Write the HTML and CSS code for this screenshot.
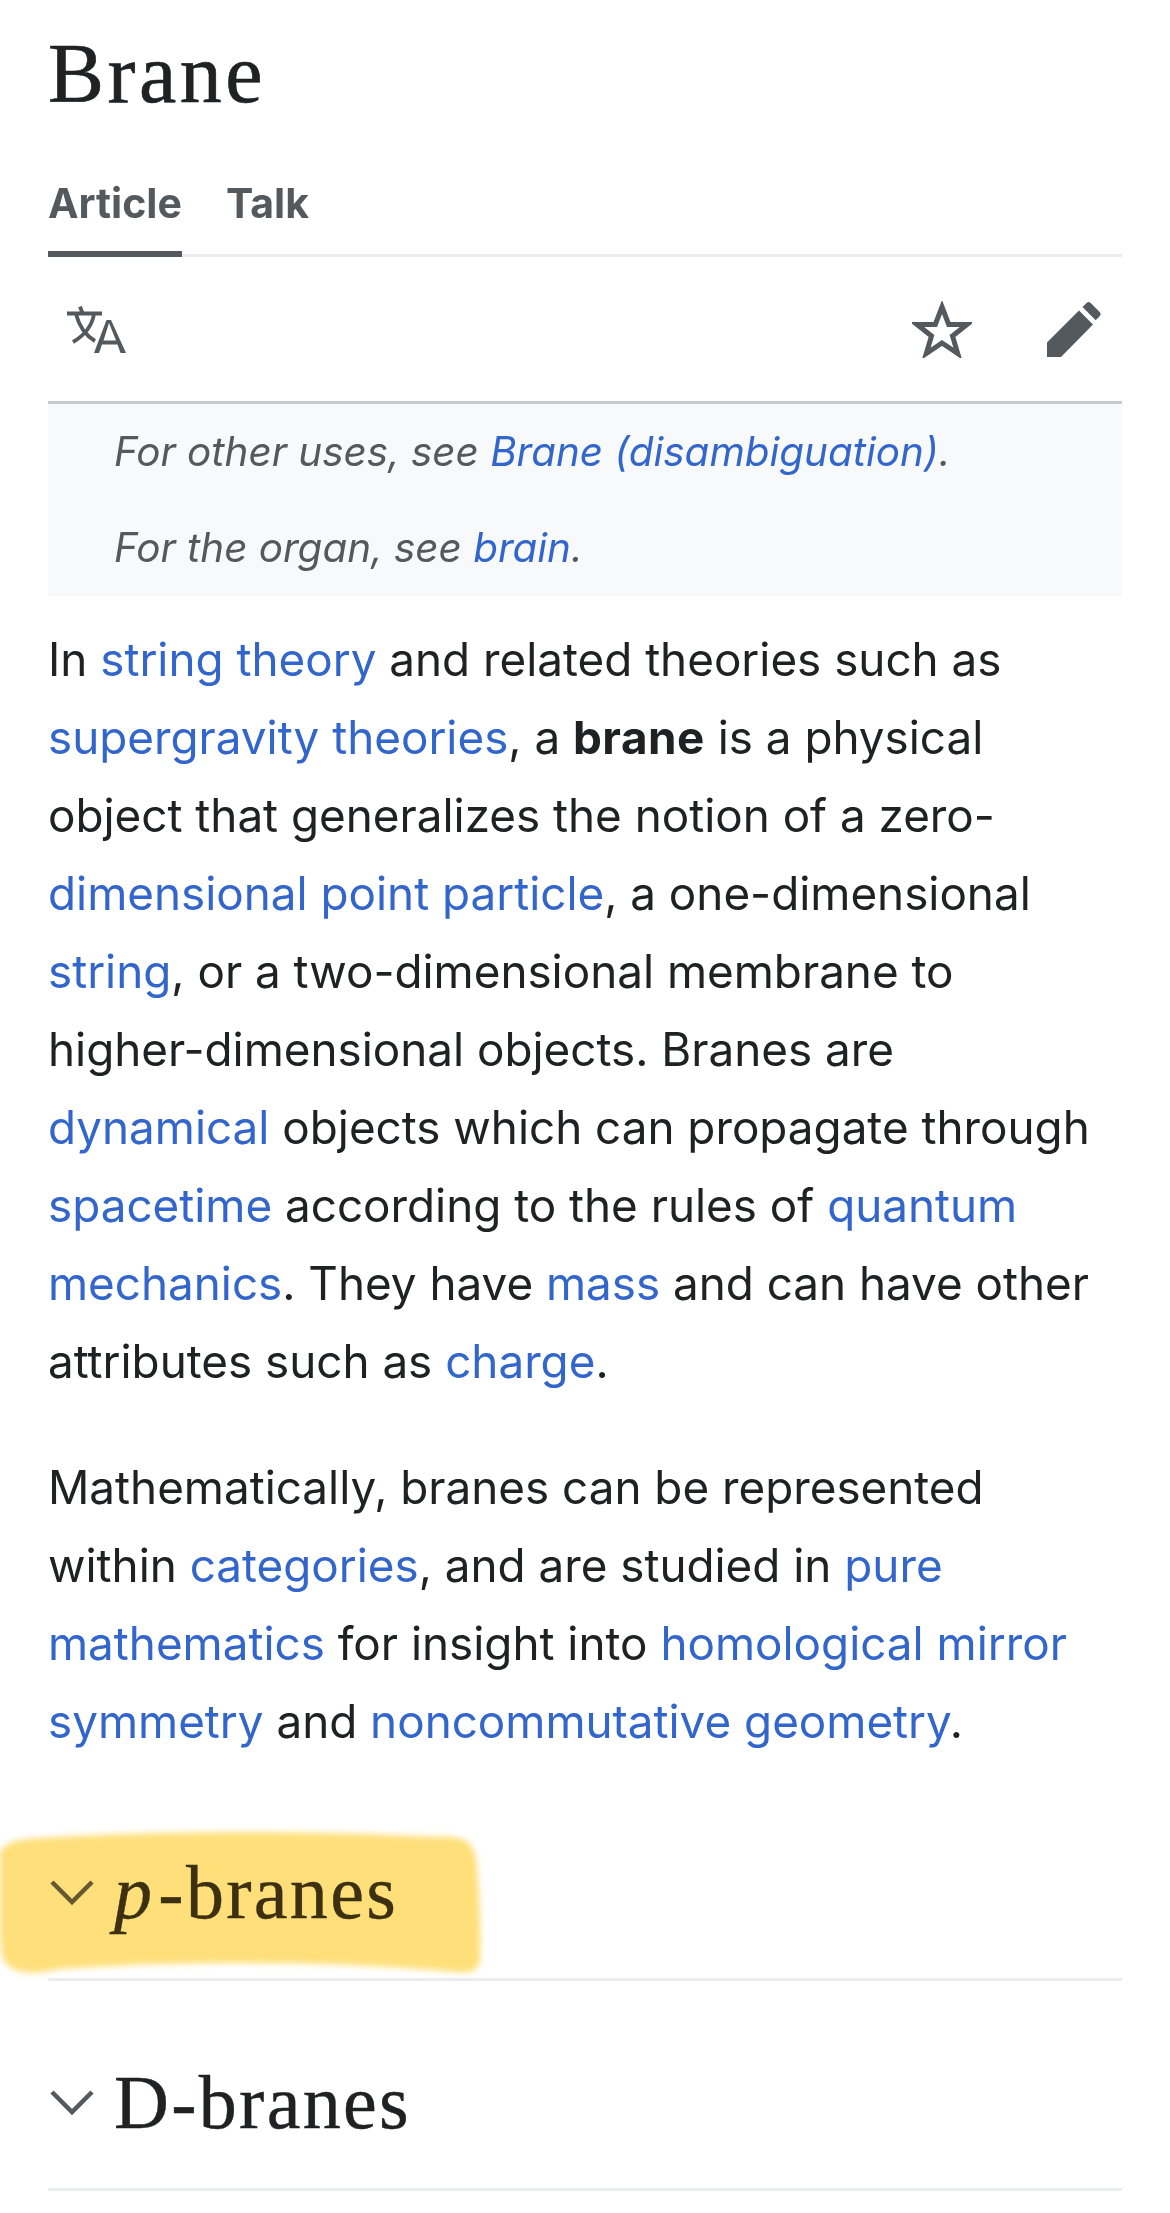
FILE: index.html
```html
<!DOCTYPE html>
<html lang="en">
<head>
<meta charset="utf-8">
<title>Brane</title>
<link rel="stylesheet" href="styles.css">
</head>
<body>
<main class="page">
  <h1 class="title">Brane</h1>
  <nav class="tabs">
    <span class="tab tab-active">Article</span>
    <span class="tab">Talk</span>
  </nav>
  <div class="actions">
    <svg class="icon-lang" viewBox="0 0 60 47" width="60" height="47"><path d="M14 0.500l2.600 7M1 7.500h35M10 8c3 12 9 21 19 27M28 8c-2 12-9 21-21 28" fill="none" stroke="#54595d" stroke-width="3.800"/><path d="M28 47L40.500 14h4.500L60 47h-5.500l-3-8.500H36L33 47zM37.500 34.500h12.500L43 17z" fill="#54595d" fill-rule="evenodd"/></svg>
    <span class="actions-right">
      <svg class="icon-star" viewBox="0 0 60 57" width="60" height="57"><path d="M30 6l6.700 17.500h18.300l-14.500 11.500 5.200 17.500L30 42 14.300 52.500l5.200-17.500L5 23.500h18.300z" fill="none" stroke="#54595d" stroke-width="5"/></svg>
      <svg class="icon-pencil" viewBox="0 0 54 55" width="54" height="55"><path d="M0 40.500L32 8.500 46 22.500 14 55H0zM35.500 5l4-4c1.300-1.200 3-1.200 4.200 0l9 9c1.200 1.200 1.200 3 0 4.200l-4 4z" fill="#54595d"/></svg>
    </span>
  </div>
  <div class="hatnotes">
    <p class="hatnote">For other uses, see <a>Brane (disambiguation)</a>.</p>
    <p class="hatnote">For the organ, see <a>brain</a>.</p>
  </div>
  <div class="content">
    <p>In <a>string theory</a> and related theories such as<br><a>supergravity theories</a>, a <b>brane</b> is a physical<br>object that generalizes the notion of a zero-<br><a>dimensional point particle</a>, a one-dimensional<br><a>string</a>, or a two-dimensional membrane to<br>higher-dimensional objects. Branes are<br><a>dynamical</a> objects which can propagate through<br><a>spacetime</a> according to the rules of <a>quantum</a><br><a>mechanics</a>. They have <a>mass</a> and can have other<br>attributes such as <a>charge</a>.</p>
    <p>Mathematically, branes can be represented<br>within <a>categories</a>, and are studied in <a>pure</a><br><a>mathematics</a> for insight into <a>homological mirror</a><br><a>symmetry</a> and <a>noncommutative geometry</a>.</p>
  </div>
  <section class="section section-marked">
    <svg class="chevron" viewBox="0 0 46 28" width="46" height="28"><path d="M4 4L24 24 44 4" fill="none" stroke="#54595d" stroke-width="4.500"/></svg>
    <h2 class="section-title"><i>p</i>-branes</h2>
    <svg class="highlight" viewBox="0 0 490 150" width="490" height="150"><path d="M0 25C10 14 22 13 40 12 C150 5 300 4 440 11 C462 10 472 14 476 32 C480 70 481 110 480 135 C478 145 470 148 455 146 C330 134 170 135 60 143 C30 150 8 148 2 130 C-2 100 -2 60 0 25Z" fill="#fedf7a"/></svg>
  </section>
  <section class="section">
    <svg class="chevron" viewBox="0 0 46 28" width="46" height="28"><path d="M4 4L24 24 44 4" fill="none" stroke="#54595d" stroke-width="4.500"/></svg>
    <h2 class="section-title">D-branes</h2>
  </section>
</main>
</body>
</html>
```
FILE: styles.css
```css
html, body { margin: 0; padding: 0; background: #fff; }
.page { width: 1170px; height: 2213px; box-sizing: border-box; padding: 0 48px; overflow: hidden; color: #202122; font-family: Inter, "Liberation Sans", sans-serif; }
.title { margin: 0; padding-top: 29px; height: 130px; box-sizing: border-box; font: 400 84px/90px "Liberation Serif", serif; letter-spacing: 3.500px; -webkit-text-stroke: 0.6px #202122; }
.tabs { display: flex; gap: 44px; height: 127px; box-sizing: border-box; padding-top: 49px; border-bottom: 3px solid #eaecf0; }
.tab { height: 78px; box-sizing: border-box; font-size: 41px; font-weight: 700; line-height: 48px; color: #54595d; }
.tab-active { border-bottom: 6px solid #54595d; }
.actions { display: flex; justify-content: space-between; align-items: center; height: 147px; box-sizing: border-box; padding: 0 21px 0 18px; border-bottom: 3px solid #c8ccd1; }
.actions-right { display: flex; align-items: center; gap: 75px; }
.hatnotes { background: #f8f9fa; padding: 9px 66px 0; height: 192px; box-sizing: border-box; }
.hatnote { margin: 0 0 18px; font-size: 40.400px; line-height: 78px; font-style: italic; color: #54595d; }
a { color: #3366cc; text-decoration: none; }
.content { padding-top: 25px; font-size: 45.800px; line-height: 78px; }
.content p { margin: 0 0 48px; }
.content p:last-child { margin-bottom: 10px; }
.content b { letter-spacing: 0.500px; }
.section { position: relative; display: flex; align-items: center; gap: 20px; height: 210px; box-sizing: border-box; padding-top: 34px; border-bottom: 3px solid #eaecf0; }
.section-title { margin: 0; font: 400 76px/90px "Liberation Serif", serif; letter-spacing: 2.300px; -webkit-text-stroke: 0.4px currentColor; }
.section-title i { margin-right: 4px; }
.section-marked .section-title { color: #3c3620; }
.section-marked .chevron path { stroke: #656662; }
.highlight { position: absolute; left: -48px; top: 55px; filter: blur(3px); mix-blend-mode: multiply; }
```
